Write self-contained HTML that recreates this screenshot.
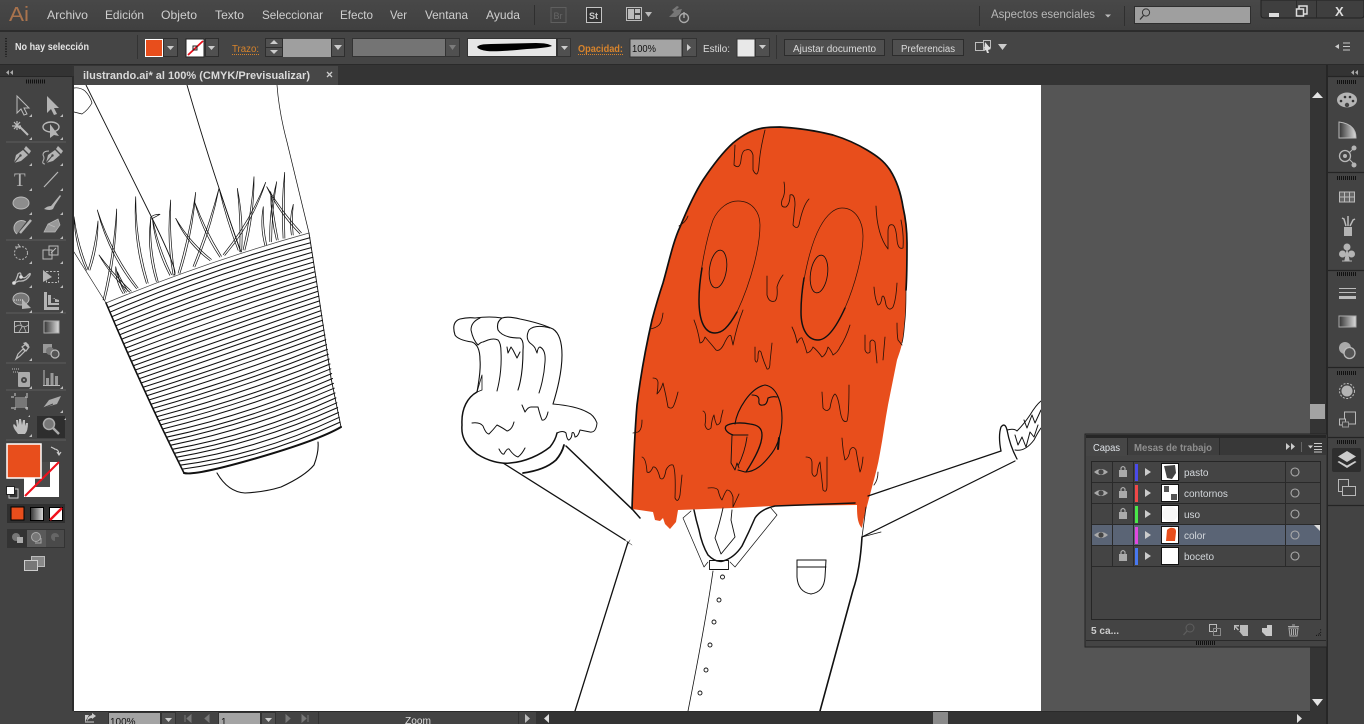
<!DOCTYPE html>
<html><head><meta charset="utf-8"><title>ilustrando.ai</title>
<style>
html,body{margin:0;padding:0;width:1364px;height:724px;overflow:hidden;background:#444}
svg{display:block;font-family:"Liberation Sans",sans-serif}
.m{font-size:12px;fill:#cfcfcf}
.c{font-size:10px;fill:#dcdcdc}
.o{font-size:10px;fill:#d8842c}
.k{fill:none;stroke:#111;stroke-linecap:round;stroke-linejoin:round}
.i{fill:#b4b4b4}
.s{fill:none;stroke:#b8b8b8}
.l{font-size:10px;fill:#d4d8dc}
</style></head><body>
<svg width="1364" height="724" viewBox="0 0 1364 724" xmlns="http://www.w3.org/2000/svg">
<defs><clipPath id="cv"><rect x="74" y="85" width="967" height="626"/></clipPath>
<linearGradient id="gr" x1="0" x2="1"><stop offset="0" stop-color="#333"/><stop offset="1" stop-color="#ddd"/></linearGradient>
<linearGradient id="top" x1="0" x2="0" y1="0" y2="1"><stop offset="0" stop-color="#484848"/><stop offset="1" stop-color="#404040"/></linearGradient></defs>
<!-- base -->
<rect width="1364" height="724" fill="#434343"/>
<rect width="1364" height="30" fill="url(#top)"/>
<rect y="30" width="1364" height="2" fill="#2c2c2c"/>
<rect y="32" width="1364" height="32" fill="#454545"/>
<rect y="64" width="1364" height="1.5" fill="#2a2a2a"/>
<!-- menu -->
<text x="9" y="21" font-size="20" fill="#a9734d" textLength="20" lengthAdjust="spacingAndGlyphs">Ai</text>
<text class="m" x="47" y="19" textLength="41" lengthAdjust="spacingAndGlyphs">Archivo</text>
<text class="m" x="105" y="19" textLength="39" lengthAdjust="spacingAndGlyphs">Edición</text>
<text class="m" x="161" y="19" textLength="36" lengthAdjust="spacingAndGlyphs">Objeto</text>
<text class="m" x="215" y="19" textLength="29" lengthAdjust="spacingAndGlyphs">Texto</text>
<text class="m" x="262" y="19" textLength="61" lengthAdjust="spacingAndGlyphs">Seleccionar</text>
<text class="m" x="340" y="19" textLength="33" lengthAdjust="spacingAndGlyphs">Efecto</text>
<text class="m" x="390" y="19" textLength="17" lengthAdjust="spacingAndGlyphs">Ver</text>
<text class="m" x="425" y="19" textLength="43" lengthAdjust="spacingAndGlyphs">Ventana</text>
<text class="m" x="486" y="19" textLength="34" lengthAdjust="spacingAndGlyphs">Ayuda</text>
<rect x="534" y="5" width="1" height="20" fill="#2f2f2f"/>
<rect x="551" y="7.5" width="15" height="15" fill="none" stroke="#5f5f5f"/>
<text x="553.5" y="19" font-size="9" fill="#666">Br</text>
<rect x="586.5" y="7.5" width="15" height="15" fill="#333" stroke="#c4c4c4"/>
<text x="589" y="19" font-size="9" font-weight="bold" fill="#ccc">St</text>
<rect x="626.5" y="7.5" width="15" height="13" fill="#444" stroke="#bbb"/><rect x="628" y="9" width="6" height="10" fill="#bbb"/><rect x="635" y="9" width="5" height="4" fill="#bbb"/><rect x="635" y="15" width="5" height="4" fill="#bbb"/>
<path d="M645 12h7l-3.5 5z" fill="#bbb"/>
<path d="M669 17l7-7 6-1-2 5-4 3zM672 10l5-4 2 1-5 5z" fill="#777"/><circle cx="684" cy="18" r="4.5" fill="none" stroke="#aaa" stroke-width="1.4"/><path d="M684 12v6" stroke="#aaa" stroke-width="1.4"/>
<rect x="979" y="6" width="1" height="20" fill="#2f2f2f"/>
<text x="991" y="18" font-size="12" fill="#b8b8b8" textLength="104" lengthAdjust="spacingAndGlyphs">Aspectos esenciales</text>
<path d="M1105 14.5h6l-3 3z" fill="#bbb"/>
<rect x="1124" y="6" width="1" height="20" fill="#2f2f2f"/>
<rect x="1134.5" y="6.5" width="116" height="17" fill="#9f9f9f" stroke="#2e2e2e"/>
<circle cx="1146" cy="12.5" r="3.6" fill="none" stroke="#333"/><path d="M1143.5 15.500l-3.500 4" stroke="#333" stroke-width="1.300"/>
<!-- window btns -->
<path d="M1261 0v15q0 3 3 3h97q3 0 3-3V0z" fill="#3f3f3f" stroke="#222"/>
<rect x="1296" y="0" width="1" height="18" fill="#2a2a2a"/><rect x="1316" y="0" width="1" height="18" fill="#2a2a2a"/>
<rect x="1269" y="13" width="10" height="4" fill="#ddd"/>
<rect x="1299" y="6" width="8" height="8" fill="none" stroke="#ddd" stroke-width="1.500"/><rect x="1296.500" y="9" width="7" height="7" fill="#3f3f3f" stroke="#ddd" stroke-width="1.500"/>
<text x="1335" y="16" font-size="13" font-weight="bold" fill="#ddd">X</text>
<!-- control bar -->
<path d="M6 38v19" stroke="#222" stroke-width="2" stroke-dasharray="1.300 1.300"/>
<text x="15" y="50" font-size="10" font-weight="bold" fill="#e4e4e4" textLength="74" lengthAdjust="spacingAndGlyphs">No hay selección</text>
<rect x="137" y="35" width="1" height="24" fill="#333"/>
<rect x="145" y="39" width="18" height="18" fill="#fff"/><rect x="146" y="40" width="16" height="16" fill="#e84e1c"/>
<rect x="163.500" y="38.500" width="14" height="18" fill="#505050" stroke="#2e2e2e"/><path d="M167 46h7l-3.500 4z" fill="#ccc"/>
<rect x="186" y="39" width="18" height="18" fill="#fff" stroke="#222"/><path d="M188 55L203 41" stroke="#e8101c" stroke-width="1.800"/><rect x="193" y="46" width="4" height="4" fill="none" stroke="#222"/>
<rect x="205.500" y="38.500" width="13" height="18" fill="#505050" stroke="#2e2e2e"/><path d="M208 46h7l-3.500 4z" fill="#ccc"/>
<text class="o" x="232" y="52" textLength="27" lengthAdjust="spacingAndGlyphs">Trazo:</text><path d="M232 54.500h27" stroke="#d8842c" stroke-dasharray="1 1"/>
<rect x="265.500" y="38.500" width="17" height="18" fill="#505050" stroke="#2e2e2e"/><path d="M266 47.500h16" stroke="#2e2e2e"/><path d="M270 44l4-4 4 4zM270 50l4 4 4-4z" fill="#ccc"/>
<rect x="283" y="39" width="48" height="18" fill="#9f9f9f"/>
<rect x="331.500" y="38.500" width="13" height="18" fill="#505050" stroke="#2e2e2e"/><path d="M334 45h8l-4 5z" fill="#ccc"/>
<rect x="352.500" y="38.500" width="93" height="18" fill="#747474" stroke="#333"/>
<rect x="445.500" y="38.500" width="14" height="18" fill="#505050" stroke="#333"/><path d="M449 45h7l-3.500 5z" fill="#7c7c7c"/>
<rect x="467.500" y="38.500" width="89" height="18" fill="#e6e6e6" stroke="#333"/>
<path d="M477 47q2-3 14-3l45-1q12 0 16 3q-6 2-25 3q-30 3-40 2q-8-1-10-4z" fill="#000"/>
<rect x="557.500" y="38.500" width="13" height="18" fill="#505050" stroke="#333"/><path d="M561 46h7l-3.500 4z" fill="#ccc"/>
<text class="o" x="578" y="52" textLength="45" lengthAdjust="spacingAndGlyphs" font-weight="bold">Opacidad:</text><path d="M578 54.500h45" stroke="#d8842c" stroke-dasharray="1 1"/>
<rect x="630" y="39" width="52" height="18" fill="#a4a4a4" stroke="#333"/><text x="632" y="52" font-size="10" fill="#111" textLength="24" lengthAdjust="spacingAndGlyphs">100%</text>
<rect x="682.500" y="38.500" width="14" height="18" fill="#505050" stroke="#333"/><path d="M687 44v7l4-3.500z" fill="#ccc"/>
<text x="703" y="52" font-size="10" fill="#dcdcdc" textLength="27" lengthAdjust="spacingAndGlyphs">Estilo:</text>
<rect x="737" y="39" width="18" height="18" fill="#e8e8e8" stroke="#333"/>
<rect x="755.500" y="38.500" width="14" height="18" fill="#505050" stroke="#333"/><path d="M759 45h7l-3.500 4z" fill="#ccc"/>
<rect x="776" y="35" width="1" height="24" fill="#333"/>
<rect x="784.500" y="39.500" width="100" height="16" fill="#4f4f4f" stroke="#2c2c2c"/><text class="c" x="793" y="52" textLength="83" lengthAdjust="spacingAndGlyphs">Ajustar documento</text>
<rect x="892.500" y="39.500" width="71" height="16" fill="#4f4f4f" stroke="#2c2c2c"/><text class="c" x="901" y="52" textLength="54" lengthAdjust="spacingAndGlyphs">Preferencias</text>
<g fill="none" stroke="#bdbdbd"><rect x="975.500" y="42.500" width="8" height="8"/><rect x="983.500" y="40.500" width="7" height="7"/></g><path d="M985 42l6 7-3 1 1 3-2 0-1-3-2 1z" fill="#ddd"/>
<path d="M998 44h9l-4.500 6z" fill="#ccc"/>
<g stroke="#c8c8c8"><path d="M1343 43h7M1343 46.500h7M1343 50h7"/></g><path d="M1335 46.500l4-2.500v5z" fill="#ccc"/>
<!-- tab bar -->
<rect x="72" y="65" width="1256" height="20" fill="#343434"/>
<rect x="74" y="66" width="264" height="19" fill="#474747"/>
<text x="83" y="79" font-size="11" font-weight="bold" fill="#dadada" textLength="227" lengthAdjust="spacingAndGlyphs">ilustrando.ai* al 100% (CMYK/Previsualizar)</text>
<path d="M327 72l5 5M332 72l-5 5" stroke="#ccc" stroke-width="1.300"/>
<!-- toolbar -->
<rect x="0" y="65" width="72" height="11" fill="#333"/><rect x="0" y="76" width="72" height="1" fill="#262626"/>
<path d="M9 70l-3 2.500 3 2.500zM13 70l-3 2.500 3 2.500z" fill="#aaa"/>
<path d="M26 81.500h19" stroke="#111" stroke-width="4" stroke-dasharray="1 1"/>
<rect x="72" y="76" width="2" height="648" fill="#2b2b2b"/>
<path d="M6 142h60M6 240h60M6 313h60M6 363h60M6 390h60M6 440h60" stroke="#5c5c5c"/>
<!-- tools -->
<path d="M17 96v17l4-4 3 6 3-1-3-6h5z" fill="#444" stroke="#bbb"/>
<path d="M47 96v17l4-4 3 6 3-1-3-6h5z" fill="#b4b4b4"/>
<g stroke="#bbb" stroke-width="1.200" fill="none"><path d="M19 126l9 9" stroke-width="2"/><path d="M17 121v9M12 126h9M14 122l6 7M20 122l-6 7"/></g>
<ellipse cx="51" cy="127" rx="8" ry="5" class="s" stroke-width="1.400"/><path d="M50 124v14l4-3 5 1z" class="i"/>
<path d="M14 163l2-8 7-5 5 5-7 6z" class="i"/><path d="M24 149l2-3 5 5-2 3z" class="i"/><path d="M14 163l6-7" stroke="#444"/><circle cx="20.500" cy="155.500" r="1.200" fill="#444"/>
<path d="M46 163l2-8 7-5 5 5-7 6z" class="i"/><path d="M56 149l2-3 5 5-2 3z" class="i"/><path d="M46 163l6-7" stroke="#444"/><circle cx="52.500" cy="155.500" r="1.200" fill="#444"/><path d="M49 151q-6 0-6 4 2 3 0 6-1 3 2 3" class="s"/>
<text x="14" y="186" font-family="Liberation Serif,serif" font-size="19" fill="#b4b4b4">T</text>
<path d="M44 187l14-15" class="s" stroke-width="1.200"/>
<ellipse cx="21" cy="203" rx="8" ry="6" fill="#8d8d8d" stroke="#bbb"/>
<path d="M60 195l-9 11q-4 0-7 3 6 2 9 0l2-4 6-9z" class="i"/>
<path d="M26 222a7 7 0 1 0-9 12" fill="#8a8a8a" stroke="#bbb"/><path d="M20 233l11-13" stroke="#b4b4b4" stroke-width="2.500"/>
<path d="M44 232l4-8 10-5 2 6-5 7zM48 224l7 3" fill="#999" stroke="#bbb" stroke-width=".7"/>
<circle cx="21" cy="253" r="6.500" class="s" stroke-dasharray="2 1.500"/><path d="M15 247h5l-2-3" class="s"/>
<rect x="43" y="250" width="9" height="9" class="s"/><rect x="49" y="246" width="9" height="9" class="s"/><path d="M51 253l5-5" stroke="#bbb"/>
<path d="M14 283q3-4 4-9 3-3 3 2 3 4 7-1 3-3 2 0-4 7-11 6z" class="s" stroke-width="1.300"/><circle cx="14" cy="283" r="1.800" fill="#ddd"/><circle cx="21" cy="277" r="1.800" fill="#ddd"/>
<rect x="46.500" y="271.500" width="12" height="11" class="s" stroke-dasharray="2 1.500"/><path d="M43 270l9 7-9 5z" class="i"/>
<ellipse cx="21" cy="299" rx="8" ry="6" fill="#777" stroke="#bbb"/><path d="M22 299l9 9-9 1z" class="i"/><path d="M14 300h10" stroke="#ddd" stroke-dasharray="1 1"/>
<path d="M44 292h3v15h12v3H44zM48 295h3v8h8v2H48zM52 298h3v4h4v-2h0" class="i"/>
<rect x="14.500" y="321.500" width="14" height="11" fill="none" stroke="#bbb"/><path d="M15 327q4-3 7-1t6-1M20 322l2 5-3 5M24 327l2 5" class="s" stroke-width=".8"/>
<rect x="44" y="321" width="15" height="12" fill="url(#gr)" stroke="#aaa"/>
<path d="M18 354l5-5 2 2-5 5-4 3zM22 347l4-3 3 3-3 4z" fill="none" stroke="#bbb" stroke-width="1.200"/><path d="M23 343l3-1 3 3-1 3z" fill="#bbb"/>
<rect x="43" y="344" width="9" height="9" fill="#999"/><circle cx="50" cy="351" r="4" fill="#777"/><circle cx="55" cy="354" r="4" fill="#555" stroke="#bbb" stroke-width="1.200"/>
<rect x="18" y="372" width="12" height="15" rx="1" fill="#aaa"/><circle cx="24" cy="380" r="3" fill="#444"/><circle cx="24" cy="380" r="1" fill="#aaa"/><path d="M12 369h8M13 372h6" stroke="#bbb" stroke-dasharray="1 1"/>
<path d="M43 385.500h17M44 370v15" stroke="#bbb"/><rect x="46" y="378" width="3" height="7" fill="#999"/><rect x="50.500" y="373" width="3" height="12" fill="#999"/><rect x="55" y="376" width="3" height="9" fill="#999"/>
<rect x="15" y="397" width="12" height="11" fill="#777"/><path d="M11 397h17M11 408h17M15 393v19M27 393v19" stroke="#ccc" stroke-dasharray="3 11"/>
<path d="M43 408l6-8 12-4-4 8z" fill="#aaa"/><path d="M43 408l10-4" stroke="#444"/>
<path d="M15 430q-3-5-1-6l3 3-1-7 2 0 1 5 0-6 2 0 1 6 1-5 2 0 0 6 1-3 2 0q0 8-3 11h-7z" fill="#bdbdbd"/>
<rect x="37" y="416" width="28" height="22" fill="#2e2e2e"/><circle cx="49" cy="424" r="5.500" fill="#777" stroke="#aaa" stroke-width="1.500"/><path d="M53 428l6 6" stroke="#aaa" stroke-width="2.500"/>
<path d="M66 418l-2 2h2zM30 415l-2 2h2zM32 114l-3 3h3zM63 114l-3 3h3zM32 137l-3 3h3zM63 137l-3 3h3zM32 163l-3 3h3zM63 163l-3 3h3zM32 188l-3 3h3zM63 188l-3 3h3zM32 212l-3 3h3zM63 212l-3 3h3zM32 236l-3 3h3zM63 236l-3 3h3zM32 261l-3 3h3zM63 261l-3 3h3zM32 285l-3 3h3zM63 285l-3 3h3zM32 310l-3 3h3zM63 310l-3 3h3zM32 358l-3 3h3zM32 386l-3 3h3zM63 386l-3 3h3zM63 410l-3 3h3zM32 434l-3 3h3z" fill="#bbb"/>
<!-- fill/stroke -->
<rect x="24" y="462" width="35" height="35" fill="#fff"/><rect x="35" y="462" width="15" height="25" fill="#4a4a4a"/>
<path d="M25 496L59 462" stroke="#f0101c" stroke-width="2"/>
<rect x="7" y="444" width="34" height="34" fill="#e84e1c" stroke="#fff" stroke-width="1.500"/>
<path d="M51 447l4 2-1 0q5 0 5 6M57 452l2 3 2-3" fill="none" stroke="#ccc" stroke-width="1.100"/>
<rect x="9" y="489" width="9" height="9" fill="#333" stroke="#ccc"/><rect x="6.500" y="486.500" width="8" height="8" fill="#fff" stroke="#222"/>
<rect x="7" y="504" width="58" height="19" fill="#2f2f2f"/>
<rect x="11" y="507" width="13" height="13" fill="#e84e1c" stroke="#000"/><rect x="30.500" y="507.500" width="13" height="13" fill="url(#gr)" stroke="#000"/><rect x="49.500" y="507.500" width="13" height="13" fill="#fff" stroke="#000"/><path d="M50 520l12-12" stroke="#f0101c" stroke-width="2.500"/>
<rect x="7" y="529" width="58" height="19" fill="#333"/><rect x="27" y="530" width="19" height="17" fill="#5a5a5a"/><rect x="46" y="530" width="18" height="17" fill="#4a4a4a"/>
<circle cx="16" cy="537" r="4" fill="#777"/><rect x="17" y="537" width="6" height="6" fill="#aaa"/>
<circle cx="36" cy="537" r="4.500" fill="#777" stroke="#aaa"/><path d="M35 543h6v-5" stroke="#aaa" fill="none"/>
<circle cx="55" cy="537" r="4" fill="#666"/><path d="M55 537h4v4h-4z" fill="#4a4a4a"/>
<rect x="31.500" y="556.500" width="13" height="10" fill="#888" stroke="#bbb"/><rect x="24.500" y="560.500" width="13" height="10" fill="#777" stroke="#ccc"/>
<!-- canvas -->
<rect x="74" y="85" width="967" height="626" fill="#fff"/>
<rect x="1041" y="85" width="269" height="626" fill="#555"/>
<g clip-path="url(#cv)">
<!-- body fill -->
<path d="M632 509C633 480 634 440 637 405 640 380 644 355 652 320 656 305 658 298 663 283 669 262 673 242 680 227 687 210 694 194 703 180 713 165 722 153 733 143 744 134 752 130 763 128 769 127 774 127 780 127 800 128 817 131 833 135 846 139 857 144 867 150 877 156 884 161 890 170 897 181 901 194 903 207 906 220 907 231 907 243 907 260 907 275 906 290 906 300 906 310 905 320 904 329 904 336 902 343 901 349 899 354 897 360 894 375 891 390 888 405 885 421 883 437 880 453 878 465 875 476 872 487 870 495 868 502 866 510 864 517 863 522 862 528 860 526 859 524 858 520 857 515 857 510 857 505L773 506 733 508 678 510 676 522 670 529 665 524 663 518 660 521 655 520 653 512z" fill="#e84e1c"/>
<path class="k" stroke-width="1.700" d="M632 509C633 480 634 440 637 405 640 380 644 355 652 320 656 305 658 298 663 283 669 262 673 242 680 227 687 210 694 194 703 180 713 165 722 153 733 143 744 134 752 130 763 128 769 127 774 127 780 127 800 128 817 131 833 135 846 139 857 144 867 150 877 156 884 161 890 170 897 181 901 194 903 207 906 220 907 231 907 243 907 260 907 275 906 290"/>
<path class="k" stroke-width=".7" stroke="#3a1a0c" d="M906 290C906 300 906 310 905 320 904 329 904 336 902 343"/>
<g class="k" stroke-width=".85" style="stroke:#2a1208">
<path stroke-width=".7" d="M738 201C752 201 760 212 760 225 760 245 752 280 737 312 728 328 722 333 715 333 705 333 699 322 699 300 699 275 706 240 713 220 719 207 729 201 738 201z"/>
<path stroke-width="1.500" style="stroke:#111" d="M737 312C728 328 722 333 715 333 705 333 699 322 699 300 699 290 700 280 702 268"/>
<ellipse cx="718" cy="269" rx="8.500" ry="19" transform="rotate(8 718 269)" style="stroke:#111"/>
<path stroke-width=".7" d="M842 208C856 208 863 222 863 236 863 255 855 285 845 308 835 330 826 340 818 340 808 340 801 330 801 312 801 285 810 245 820 227 827 214 835 208 842 208z"/>
<path stroke-width="1.500" style="stroke:#111" d="M845 308C835 330 826 340 818 340 808 340 801 330 801 312 801 300 802 290 804 278"/>
<ellipse cx="819" cy="274" rx="8.500" ry="19" transform="rotate(8 819 274)" style="stroke:#111"/>
<path d="M765 130Q760 150 759 165T753 170V155Q751 148 746 150 742 150 741 160T734 165L735 145"/>
<path d="M784 182Q786 193 782 200 780 208 786 207 790 204 790 195 795 193 795 205L793 225Q797 230 799 225 803 205 809 199"/>
<path d="M767 276V295Q769 303 775 301 778 298 777 287 779 280 783 275"/>
<path d="M876 206Q877 235 888 249V232Q888 223 893 225 896 227 897 240 898 250 903 248 904 235 901 220"/>
<path d="M874 287Q875 300 878 305 881 305 882 297 884 293 886 305 889 312 893 307 896 300 897 283"/>
<path d="M694 320Q698 330 700 343 703 343 705 337 712 345 716 350 720 352 724 344 729 333 731 336L733 345Q737 325 743 310"/>
<path d="M792 327Q796 335 797 343 800 337 802 338 805 345 807 353 811 352 813 347 817 350 822 357 826 355 828 347 831 350 833 355 838 352 840 347 846 338 850 325"/>
<path d="M688 216Q686 222 679 226M663 313Q662 322 659 325T650 329"/>
<path d="M865 335V350Q867 355 870 352V342Q872 338 875 342L877 363M885 337L883 360M897 323Q897 335 898 340L902 345"/>
<path d="M755 347V360Q757 365 758 358 758 348 761 352 763 360 767 369 770 370 770 362L772 343"/>
<path d="M653 378Q658 378 658 383T657 394Q661 390 663 383 666 395 668 407 672 410 674 405T678 392"/>
<path d="M703 411Q707 412 705 425 707 432 711 428 712 418 714 415 715 422 717 425 721 424 721 418L723 410"/>
<path d="M822 392L823 408Q827 413 830 408 832 396 835 394 838 396 840 410 842 424 847 421 849 415 849 385"/>
<path d="M842 438Q843 452 845 460 849 458 850 450 853 445 856 450 858 462 860 472 862 468 863 457"/>
<path d="M806 457Q812 457 812 463V473Q814 479 817 474 818 465 820 462 821 472 823 490 827 494 827 485V457"/>
<path d="M642 457Q646 458 647 472 650 474 653 467 657 466 660 478 664 482 666 470 669 464 673 465 676 470 675 498 678 504 680 495L682 475"/>
<path d="M708 488Q716 487 718 490 720 498 722 500 725 492 727 490 731 490 733 497V507L739 494"/>
<path d="M642 420Q642 430 638 432L633 433M878 472Q878 480 874 485"/>
</g>
<!-- mouth -->
<g class="k">
<path stroke-width="1.100" d="M735 424C737 410 750 388 765 385 778 387 782 405 782 418 782 432 778 445 772 453 763 465 755 472 745 472L738 470"/>
<path stroke-width="1.100" d="M752 395Q759 395 759 400 758 406 763 405 767 405 768 398 772 396 777 397"/>
<path stroke-width="1.300" d="M733 435C727 433 724 429 726 426 730 423 740 422 750 424 758 425 762 428 762 435 762 445 755 458 746 472"/>
<path stroke-width=".9" d="M733 435H748M732 435L731 463 735 470 737 463 739 468M747 437Q745 452 738 466"/>
<path stroke-width="2" d="M778 449L779 438"/>
</g>
<!-- collar & shirt -->
<g class="k" stroke-width=".9">
<path stroke-width=".7" d="M691 511L683 518 704 567 708 562"/>
<path stroke-width=".7" d="M770 507L777 515 735 567 730 562"/>
<path d="M723 508Q720 522 715 538L721 554 735 537 731 520 732 510"/>
<path stroke-width="1.500" d="M694 510Q696 520 699 530 702 545 708 555 716 563 723 561 734 558 742 546 749 532 755 518 761 509 775 506L855 503"/>
<rect x="709.500" y="560.500" width="19" height="9"/>
<path stroke-width=".8" d="M881 532L862 537M866 507L862 537"/>
<path d="M862 537Q860 570 853 590L820 711" stroke-width="1.600"/>
<path d="M797 560H826M797 567H826" stroke-width=".9"/>
<path stroke-width="1" d="M797 560V577Q798 592 811 594 824 592 825 577L826 560"/>
<path d="M628 542L575 711" stroke-width="1.300"/>
<path d="M622 538L632 545M627 546L630 540" stroke-width=".5"/>
<path d="M713 571Q706 620 688 711" stroke-width=".8"/>
<circle cx="722.500" cy="577" r="2"/><circle cx="719" cy="600" r="2"/><circle cx="714" cy="622" r="2"/><circle cx="710" cy="645" r="2"/><circle cx="706" cy="670" r="2"/><circle cx="700" cy="693" r="2"/>
</g>
<!-- left arm / hand -->
<g class="k" stroke-width="1">
<path stroke-width="1.500" d="M566 446L633 510M640 518L633 510"/>
<path stroke-width="1.300" d="M503 463L625 540"/>
<path stroke-width="1.500" d="M477 392C468 397 461 408 462 425 461 436 465 445 477 454 488 461 500 464 510 463 525 462 540 455 550 447 554 442 556 438 557 433"/>
<path d="M557 433Q563 430 566 433 567 440 569 440 572 438 572 433 574 431 575 437 578 437 580 430 585 431 590 432 596 433 597 423 594 415 587 412 576 406 553 404"/>
<path stroke-width="1.100" d="M553 404Q562 375 562 355 562 335 553 329 540 323 520 319 508 316 502 318 496 322 498 330 503 338 520 338 524 340 523 350 523 375 518 390"/>
<path stroke-width="1.100" d="M477 392Q481 370 480 360 480 345 472 342 458 340 455 335 451 322 460 319 468 317 475 318 490 316 502 318"/>
<path d="M480 318Q471 322 471 330 473 340 478 345 481 342 483 342L488 340Q494 338 498 340 501 343 501 352 502 372 497 391"/>
<path d="M550 328Q535 324 529 330 525 338 530 343 534 346 535 348L537 353Q538 347 540 347 546 350 545 362 544 378 539 393"/>
<path d="M507 347L508 353 511 347 513 350 517 358 520 352M522 405L525 412Q528 407 531 407L538 407Q540 415 542 420 546 421 548 412"/>
<path d="M472 423Q480 422 483 426 486 434 489 434 493 430 497 425 503 428 507 431 512 430 514 422M499 449Q502 455 504 454 507 448 509 449 514 456 518 457 522 454 525 448"/>
<path d="M482 375L477 392 482 390 482 375" stroke-width=".8"/>
<path stroke-width="1.800" d="M523 473Q545 470 556 460 562 453 564 445"/>
</g>
<!-- right arm/hand -->
<g class="k" stroke-width="1">
<path stroke-width="1.200" d="M868 496L1001 451"/>
<path stroke-width="1.200" d="M862 537L1015 461"/>
<path d="M1001 451Q998 436 1001 427 1005 422 1007 430 1010 446 1017 459" stroke-width="1.300"/>
<path d="M1007 430Q1014 428 1017 431 1024 424 1030 415 1036 405 1041 401M1015 450Q1025 452 1034 440 1038 432 1041 428M1015 435L1018 445 1022 437 1026 447 1030 432 1034 437 1038 425M1024 420L1027 428 1032 415 1035 423 1041 410"/>
</g>
<!-- upper lines -->
<g class="k" stroke-width=".9">
<path d="M86 85Q118 150 149 212T174 275"/>
<path d="M187 85Q203 140 219 188T241 252"/>
<path stroke-width=".7" d="M277 85Q279 112 287 142L309 233"/>
<path stroke-width=".6" d="M74 252L106 303"/>
<path stroke-width=".7" d="M74 88Q80 87 85 91 90 96 92 103 88 110 82 114 78 113 74 112"/>
<path stroke-width=".7" stroke="#444" d="M106 303Q205 262 309 233"/>
<path stroke-width="1.100" d="M217 473Q228 492 245 493 265 492 281 487 305 476 314 465 319 452 318 442"/>
</g>
<g id="grass" class="k" stroke-width=".7"></g>
<g id="lines" class="k" stroke-width="1.050"></g>
<path class="k" stroke-width="1.600" d="M106 303Q145 395 184 473"/>
<path class="k" stroke-width=".9" d="M309 233Q318 290 331 378L341 427"/>
<path class="k" stroke-width="2" d="M184 473Q195 476 257 458T341 427"/>
</g>
<!-- status bar -->
<rect x="72" y="711" width="1256" height="13" fill="#434343"/><rect x="74" y="711" width="1236" height="1" fill="#2a2a2a"/>
<path d="M85 722v-7h4M92 713l4 3-4 3v-1q-4 0-5 4 0-6 5-7z" fill="#ccc"/><path d="M85 722h9" stroke="#ccc"/>
<rect x="108.500" y="712.500" width="52" height="13" fill="#a4a4a4" stroke="#333"/><text x="110" y="725" font-size="10" fill="#111">100%</text>
<rect x="161.500" y="712.500" width="14" height="13" fill="#505050" stroke="#333"/><path d="M165 718h7l-3.500 4z" fill="#ccc"/>
<path d="M185 715v7M191 715l-4 3.500 4 3.500zM209 715l-4 3.500 4 3.500z" fill="#777" stroke="#777"/>
<rect x="218.500" y="712.500" width="42" height="13" fill="#a4a4a4" stroke="#333"/><text x="221" y="725" font-size="10" fill="#111">1</text>
<rect x="261.500" y="712.500" width="14" height="13" fill="#505050" stroke="#333"/><path d="M265 718h7l-3.500 4z" fill="#ccc"/>
<path d="M286 715l4 3.500-4 3.500zM302 715l4 3.500-4 3.500zM308 715v7" fill="#777" stroke="#777"/>
<rect x="318" y="712" width="1" height="12" fill="#333"/>
<text x="405" y="724" font-size="10" fill="#ddd" textLength="26" lengthAdjust="spacingAndGlyphs">Zoom</text>
<rect x="518" y="712" width="1" height="12" fill="#333"/>
<path d="M525 714v9l5-4.500z" fill="#bbb"/>
<rect x="536" y="712" width="774" height="12" fill="#333"/>
<path d="M549 714v9l-5-4.500z" fill="#ddd"/>
<rect x="933" y="712" width="15" height="12" fill="#8a8a8a"/>
<path d="M1297 714v9l5-4.500z" fill="#ddd"/>
<!-- v scrollbar -->
<rect x="1310" y="85" width="16" height="639" fill="#343434"/>
<rect x="1326" y="65" width="2" height="659" fill="#262626"/>
<path d="M1312 98l5.500-6 5.500 6z" fill="#e4e4e4"/>
<rect x="1310" y="404" width="15" height="15" fill="#a3a3a3"/>
<path d="M1312 699l5.500 7 5.500-7z" fill="#e4e4e4"/>
<!-- dock -->
<rect x="1328" y="65" width="36" height="659" fill="#434343"/>
<rect x="1328" y="65" width="36" height="11" fill="#333"/><path d="M1354 70l-3 2.500 3 2.500zM1358 70l-3 2.500 3 2.500z" fill="#aaa"/>
<path d="M1328 76.500h36M1328 172.500h36M1328 270.500h36M1328 367.500h36M1328 437.500h36M1328 505.500h36" stroke="#242424" stroke-width="1.300"/>
<path d="M1337 82h19M1337 178h19M1337 274h19M1337 373h19M1337 442h19" stroke="#111" stroke-width="4" stroke-dasharray="1 1"/>
<ellipse cx="1347" cy="100" rx="10" ry="7.500" class="i"/><g fill="#333"><circle cx="1341" cy="101" r="1.300"/><circle cx="1345" cy="97" r="1.300"/><circle cx="1350" cy="97" r="1.300"/><circle cx="1353" cy="101" r="1.300"/></g><circle cx="1347" cy="105" r="2.200" fill="#434343"/>
<path d="M1339 122v16h17q0-14-17-16z" fill="url(#gr)" stroke="#bbb"/>
<circle cx="1345" cy="156" r="5.500" class="s" stroke-width="1.300"/><circle cx="1345" cy="156" r="2" class="i"/><path d="M1349 153l5-5M1349 159l5 5" class="s"/><circle cx="1354" cy="148" r="2.500" class="i"/><circle cx="1354" cy="165" r="2.500" class="i"/>
<rect x="1339.500" y="192" width="15" height="10" fill="#666" stroke="#bbb"/><path d="M1339 197h16M1344.500 192v10M1349.500 192v10" stroke="#bbb"/>
<rect x="1344" y="227" width="8" height="9" class="i"/><path d="M1346 226l-2-7-2-1M1348 226v-10M1350 226l3-6 2-1" stroke="#bbb" stroke-width="1.500" fill="none"/>
<circle cx="1347" cy="247" r="3.500" class="i"/><circle cx="1342.500" cy="254" r="3.500" class="i"/><circle cx="1351.500" cy="254" r="3.500" class="i"/><path d="M1347 250l-2 10h4zM1342 261h10" class="i" stroke="#b4b4b4"/>
<path d="M1339 288.500h17M1339 292.500h17" stroke="#bbb"/><rect x="1339" y="296" width="17" height="3" fill="#bbb"/>
<rect x="1339" y="316" width="17" height="11" fill="url(#gr)" stroke="#aaa"/>
<circle cx="1345" cy="348" r="6" fill="#aaa"/><circle cx="1349.500" cy="353" r="5.500" fill="#555" stroke="#bbb" stroke-width="1.300"/>
<circle cx="1347" cy="391" r="7.500" fill="none" stroke="#bbb" stroke-dasharray="2 1.500"/><circle cx="1347" cy="391" r="5.500" class="i"/>
<rect x="1344.500" y="412" width="11" height="12" class="s"/><rect x="1339.500" y="419" width="6" height="6" fill="#434343" stroke="#bbb"/><rect x="1342.500" y="422" width="6" height="5" fill="#434343" stroke="#999"/>
<rect x="1332" y="448" width="29" height="24" rx="2" fill="#2e2e2e"/>
<path d="M1347 451l9 5.500-9 5.500-9-5.500z" fill="#ccc"/><path d="M1339 461l8 4.500 8-4.500 1.500 1-9.500 6-9.500-6z" fill="#ccc"/>
<rect x="1338.500" y="479.500" width="10" height="12" class="s"/><rect x="1342.500" y="486.500" width="13" height="9" fill="#434343" stroke="#b8b8b8"/>
<!-- layers panel -->
<rect x="1085" y="434" width="242" height="213" fill="#444" stroke="#242424"/>
<rect x="1086" y="435" width="240" height="3" fill="#262626"/>
<rect x="1086" y="438" width="240" height="17" fill="#383838"/>
<rect x="1086" y="438" width="41" height="18" fill="#464646"/>
<rect x="1128" y="438" width="91" height="17" fill="#3e3e3e"/><path d="M1127.500 438v17M1219.500 438v17" stroke="#2a2a2a"/>
<text x="1093" y="451" font-size="10.500" fill="#dfe3e8" textLength="27" lengthAdjust="spacingAndGlyphs">Capas</text>
<text x="1134" y="451" font-size="10.500" font-weight="bold" fill="#8e8e8e" textLength="78" lengthAdjust="spacingAndGlyphs">Mesas de trabajo</text>
<path d="M1286 443v7l4-3.500zM1291 443v7l4-3.500z" fill="#ccc"/><path d="M1301.500 442v10" stroke="#666"/><path d="M1308 445.500h5l-2.500 3z" fill="#ccc"/><path d="M1314 443.500h8M1314 446.500h8M1314 449.500h8M1314 452h8" stroke="#ccc"/>
<rect x="1091.500" y="461.500" width="229" height="158" fill="#444" stroke="#262626"/>
<rect x="1092" y="525" width="228" height="20" fill="#5a6475"/>
<path d="M1092 482.500h228M1092 503.500h228M1092 524.500h228M1092 545.500h228M1092 566.500h228" stroke="#2a2a2a"/>
<path d="M1112.500 462v105M1133.500 462v105M1285.500 462v105" stroke="#2a2a2a"/>
<g id="rows"></g>
<path d="M1314 525h6v6z" fill="#ddd"/>
<text x="1091" y="634" font-size="10" font-weight="bold" fill="#ccc" textLength="28" lengthAdjust="spacingAndGlyphs">5 ca...</text>
<circle cx="1190" cy="628" r="4" fill="none" stroke="#5e5e5e"/><path d="M1187 631l-3.500 4" stroke="#5e5e5e" stroke-width="1.300"/>
<rect x="1209.500" y="624.500" width="7" height="7" fill="#444" stroke="#bbb"/><rect x="1213.500" y="628.500" width="7" height="7" fill="none" stroke="#888"/>
<path d="M1234 625h5v1.500h-3l3 3-1 1-3-3v2.500h-1zM1240 625h8v11h-5l-4-5h1z" fill="#bbb"/>
<path d="M1262 628h5v-3h5v11h-6l-4-4z" fill="#c8c8c8"/>
<path d="M1288 626.500h11M1292 625h3" stroke="#aaa"/><path d="M1289 628h9l-1 8h-7zM1291.500 629v6M1293.500 629v6M1295.500 629v6" fill="none" stroke="#aaa"/>
<path d="M1321 629.500l-1 1M1321 632l-3 3M1321 635l-6 .5" stroke="#111" stroke-dasharray="1 1"/>
<rect x="1086" y="640" width="240" height="1" fill="#2a2a2a"/>
<path d="M1196 643h20" stroke="#111" stroke-width="4" stroke-dasharray="1 1"/>
</svg>
<script>
(function(){
var ns='http://www.w3.org/2000/svg';
function P(g,d,sw){var p=document.createElementNS(ns,'path');p.setAttribute('d',d);if(sw)p.setAttribute('stroke-width',sw);g.appendChild(p);return p}
var L=document.getElementById('lines'),n=40;
for(var i=1;i<n;i++){var t=i/n,
 a=(1-t)*(1-t),b=2*t*(1-t),c=t*t,
 lx=a*106+b*145+c*184,ly=a*303+b*395+c*473,
 rx=309+32*t+(t<.5?-2*t:-2*(1-t)),ry=233+194*t,
 mx=(lx+rx)/2,my=(ly+ry)/2,bulge=-9+23*t+Math.sin(i*1.7)*.8;
 P(L,'M'+lx.toFixed(1)+' '+ly.toFixed(1)+'Q'+mx.toFixed(1)+' '+(my+bulge).toFixed(1)+' '+rx.toFixed(1)+' '+ry.toFixed(1));
}
var G=document.getElementById('grass');
var B=[[40,555,0,395,-14],[45,555,72,408,10],[90,645,128,372,14],[190,610,70,375,-26],[220,595,185,335,-22],[250,590,230,400,-18],[230,400,258,388,-3],[300,570,290,345,-14],[315,565,365,322,12],[360,545,435,310,10],[410,525,305,400,-18],[440,515,362,352,-12],[450,510,575,292,22],[500,500,490,310,10],[510,495,540,275,12],[575,480,568,365,-10],[590,470,608,290,-10],[630,460,632,262,-6],[680,445,578,305,-12],[655,450,658,358,-8],[170,620,75,510,-10],[150,625,125,545,-10],[160,620,130,560,-6],[495,495,435,310,-4],[610,465,590,320,-6],[290,570,235,400,-14]];
B.forEach(function(b){
 var x0=b[0]/3+74,y0=b[1]/3+85,x1=b[2]/3+74,y1=b[3]/3+85,dx=x1-x0,dy=y1-y0,l=Math.sqrt(dx*dx+dy*dy),nx=-dy/l,ny=dx/l,k=b[4]/3,
 cx=(x0+x1)/2+nx*k,cy=(y0+y1)/2+ny*k,w=1.5;
 P(G,'M'+(x0-nx*w*.6).toFixed(1)+' '+(y0-ny*w*.6).toFixed(1)+'Q'+(cx-nx*w).toFixed(1)+' '+(cy-ny*w).toFixed(1)+' '+x1.toFixed(1)+' '+y1.toFixed(1)+'Q'+(cx+nx*w).toFixed(1)+' '+(cy+ny*w).toFixed(1)+' '+(x0+nx*w*.6).toFixed(1)+' '+(y0+ny*w*.6).toFixed(1));
});
var rows=[['pasto','#4a4ae8',1,1],['contornos','#f04848',1,1],['uso','#48e848',0,1],['color','#e048e0',1,0],['boceto','#4878f0',0,1]];
var h='';
rows.forEach(function(r,i){var y=462+21*i,c=y+10;
 if(r[2])h+='<path d="M1094 '+c+'q7-6 14 0q-7 6-14 0z" fill="#aaa"/><circle cx="1101" cy="'+c+'" r="2.6" fill="#444"/>';
 if(r[3])h+='<rect x="1119" y="'+(c-2)+'" width="8" height="7" fill="#aaa"/><path d="M1121 '+(c-2)+'v-2q2-3 4 0v2" fill="none" stroke="#aaa" stroke-width="1.200"/>';
 h+='<rect x="1135" y="'+(y+2)+'" width="3" height="17" fill="'+r[1]+'"/>';
 h+='<path d="M1145 '+(c-4)+'v8l6-4z" fill="#ccc"/>';
 h+='<rect x="1161.500" y="'+(y+1.5)+'" width="17" height="17" fill="#fff" stroke="#111"/>';
 if(i==0)h+='<path d="M1164 '+(y+4)+'l11-1 1 8-4 6-5-1z" fill="#444"/>';
 if(i==1)h+='<path d="M1164 '+(y+3)+'h5v6h-5zM1171 '+(y+11)+'h6v6h-6z" fill="#555"/>';
 if(i==2)h+='<circle cx="1170" cy="'+c+'" r="7.500" fill="#f6f6f6"/>';
 if(i==3)h+='<path d="M1167 '+(y+5)+'q3-3 6-2 3 0 3 4l-1 9h-9z" fill="#e84e1c"/>';
 h+='<text class="l" x="1184" y="'+(y+14)+'" style="font-size:10px;fill:#d4d8dc" >'+r[0]+'</text>';
 h+='<circle cx="1295" cy="'+c+'" r="4" fill="none" stroke="#aaa" stroke-width="1.100"/>';
});
document.getElementById('rows').innerHTML=h;
})();
</script>
</body></html>
